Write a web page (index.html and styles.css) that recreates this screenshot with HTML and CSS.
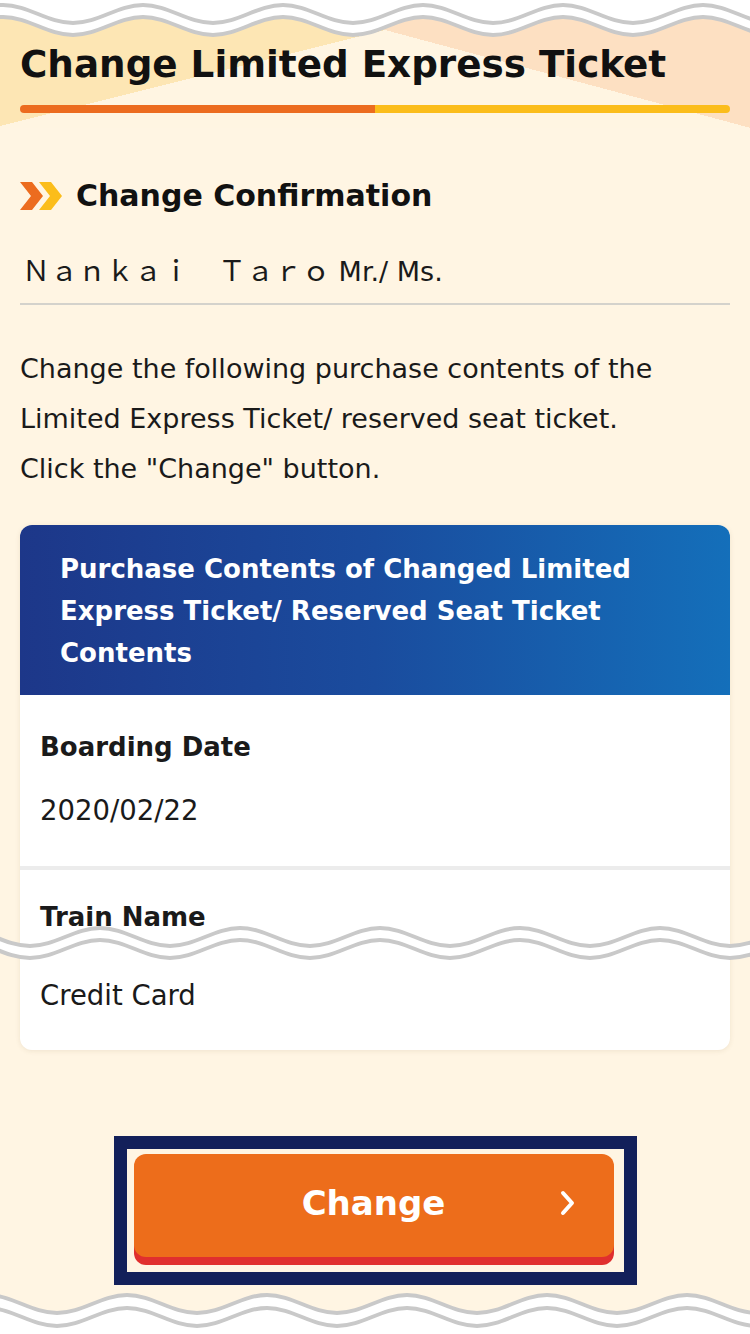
FILE: index.html
```html
<!DOCTYPE html>
<html lang="en">
<head>
<meta charset="utf-8">
<title>Change Limited Express Ticket</title>
<link rel="stylesheet" href="styles.css">
</head>
<body>
<div class="page">
  <header class="page-head">
    <h1 class="page-title">Change Limited Express Ticket</h1>
    <div class="progress"><span class="progress-done"></span><span class="progress-rest"></span></div>
  </header>

  <main class="content">
    <h2 class="section-title">
      <svg class="chevrons" width="44" height="28" viewBox="0 0 44 28" aria-hidden="true">
        <polygon points="0,0 12,0 23,14 12,28 0,28 11,14" fill="#ec6c1f"/>
        <polygon points="19,0 31,0 42,14 31,28 19,28 30,14" fill="#fbbd1b"/>
      </svg>
      <span>Change Confirmation</span>
    </h2>

    <p class="customer"><span class="customer-name">Ｎａｎｋａｉ　Ｔａｒｏ</span> Mr./ Ms.</p>

    <p class="lead">Change the following purchase contents of the Limited Express Ticket/ reserved seat ticket.<br>Click the "Change" button.</p>

    <section class="card">
      <h3 class="card-head">Purchase Contents of Changed Limited Express Ticket/ Reserved Seat Ticket Contents</h3>
      <div class="card-row row-date">
        <div class="row-label">Boarding Date</div>
        <div class="row-value">2020/02/22</div>
      </div>
      <div class="card-row row-train">
        <div class="row-label">Train Name</div>
        <div class="row-value">Credit Card</div>
      </div>
    </section>

    <div class="action">
      <div class="focus-frame">
        <button class="btn-change" type="button">
          <span class="btn-spacer"></span>
          <span class="btn-label">Change</span>
          <svg class="btn-arrow" width="16" height="26" viewBox="0 0 16 26" aria-hidden="true">
            <polyline points="3,3 12,13 3,23" fill="none" stroke="#fff" stroke-width="4" stroke-linecap="round" stroke-linejoin="round"/>
          </svg>
        </button>
      </div>
    </div>
  </main>

  <svg class="wave wave-top" width="750" height="40" viewBox="0 0 750 40" aria-hidden="true">
    <defs>
      <path id="wv" d="M-140 0 C-114.5 0 -95.5 18 -70 18 C-44.5 18 -25.5 0 0 0 C25.5 0 44.5 18 70 18 C95.5 18 114.5 0 140 0 C165.5 0 184.5 18 210 18 C235.5 18 254.5 0 280 0 C305.5 0 324.5 18 350 18 C375.5 18 394.5 0 420 0 C445.5 0 464.5 18 490 18 C515.5 18 534.5 0 560 0 C585.5 0 604.5 18 630 18 C655.5 18 674.5 0 700 0 C725.5 0 744.5 18 770 18 C795.5 18 814.5 0 840 0 C865.5 0 884.5 18 910 18"/>
    </defs>
    <path transform="translate(3,17)" fill="#fff" d="M-140 0 C-114.5 0 -95.5 18 -70 18 C-44.5 18 -25.5 0 0 0 C25.5 0 44.5 18 70 18 C95.5 18 114.5 0 140 0 C165.5 0 184.5 18 210 18 C235.5 18 254.5 0 280 0 C305.5 0 324.5 18 350 18 C375.5 18 394.5 0 420 0 C445.5 0 464.5 18 490 18 C515.5 18 534.5 0 560 0 C585.5 0 604.5 18 630 18 C655.5 18 674.5 0 700 0 C725.5 0 744.5 18 770 18 C795.5 18 814.5 0 840 0 C865.5 0 884.5 18 910 18 L910 -60 L-140 -60 Z"/>
    <use href="#wv" transform="translate(3,5)" class="wave-line"/>
    <use href="#wv" transform="translate(3,17)" class="wave-line"/>
  </svg>

  <svg class="wave wave-mid" width="750" height="50" viewBox="0 0 750 50" aria-hidden="true">
    <use href="#wv" transform="translate(-40,14)" class="wave-band"/>
    <use href="#wv" transform="translate(-40,8)" class="wave-line"/>
    <use href="#wv" transform="translate(-40,20)" class="wave-line"/>
  </svg>

  <svg class="wave wave-bottom" width="750" height="46" viewBox="0 0 750 46" aria-hidden="true">
    <path transform="translate(-13,7)" fill="#fff" d="M-140 0 C-114.5 0 -95.5 18 -70 18 C-44.5 18 -25.5 0 0 0 C25.5 0 44.5 18 70 18 C95.5 18 114.5 0 140 0 C165.5 0 184.5 18 210 18 C235.5 18 254.5 0 280 0 C305.5 0 324.5 18 350 18 C375.5 18 394.5 0 420 0 C445.5 0 464.5 18 490 18 C515.5 18 534.5 0 560 0 C585.5 0 604.5 18 630 18 C655.5 18 674.5 0 700 0 C725.5 0 744.5 18 770 18 C795.5 18 814.5 0 840 0 C865.5 0 884.5 18 910 18 L910 80 L-140 80 Z"/>
    <use href="#wv" transform="translate(-13,7)" class="wave-line"/>
    <use href="#wv" transform="translate(-13,20)" class="wave-line"/>
  </svg>
</div>
</body>
</html>
```

FILE: styles.css
```css
* { box-sizing: border-box; }

html, body {
  margin: 0;
  padding: 0;
  background: #fff5e3;
}

body {
  font-family: "DejaVu Sans", "Noto Sans CJK JP", sans-serif;
  color: #1a1a1a;
}

.page {
  position: relative;
  width: 750px;
  min-height: 1334px;
  overflow: hidden;
  background: #fff5e3;
}

/* header */
.page-head {
  padding: 36px 20px 15px;
  background: conic-gradient(at 385px 30px, #fde0c2 0deg 105deg, #fff5e2 105deg 256deg, #fde6b4 256deg 360deg);
}

.page-title {
  margin: 0;
  font-size: 37.3px;
  line-height: 56px;
  font-weight: 700;
  color: #111;
}

.progress {
  display: flex;
  height: 8px;
  margin-top: 13px;
  border-radius: 4px;
  overflow: hidden;
}

.progress-done { flex: 1; background: #ec6c1f; }
.progress-rest { flex: 1; background: #fbbd1b; }

/* content */
.content {
  padding: 0 20px 48px;
}

.section-title {
  display: flex;
  align-items: center;
  gap: 12px;
  margin: 46px 0 0;
  font-size: 30px;
  line-height: 44px;
  font-weight: 700;
  color: #111;
}

.chevrons { flex: none; }

.customer {
  margin: 31px 0 0;
  padding: 0 0 11px 2px;
  border-bottom: 2px solid #d4d2cc;
  font-size: 27px;
  line-height: 40px;
  color: #1a1a1a;
}

.customer-name {
  font-family: "Noto Sans CJK JP", sans-serif;
  font-size: 28px;
}

.lead {
  margin: 39px 0 0;
  font-size: 27px;
  line-height: 50px;
  color: #1a1a1a;
}

/* card */
.card {
  margin-top: 31px;
  background: #fff;
  border-radius: 12px;
  overflow: hidden;
  box-shadow: 0 1px 5px rgba(120, 100, 60, 0.12);
}

.card-head {
  margin: 0;
  padding: 23px 40px 21px;
  background: linear-gradient(90deg, #1d3789 0%, #1a4c9e 50%, #146fba 100%);
  color: #fff;
  font-size: 26px;
  line-height: 42px;
  font-weight: 700;
}

.card-row {
  padding: 0 20px;
}

.row-date {
  padding-top: 34px;
  padding-bottom: 36px;
  border-bottom: 4px solid #ececec;
}

.row-train {
  padding-top: 29px;
  padding-bottom: 35px;
}

.row-label {
  font-size: 26px;
  line-height: 36px;
  font-weight: 700;
  color: #1a1a1a;
}

.row-value {
  font-size: 27.5px;
  line-height: 40px;
  color: #1a1a1a;
}

.row-date .row-value { margin-top: 25px; }
.row-train .row-value { margin-top: 40px; }

/* button */
.action {
  display: flex;
  justify-content: center;
  margin-top: 86px;
}

.focus-frame {
  width: 523px;
  padding: 5px 10px 7px 7px;
  border: 13px solid #13205a;
}

.btn-change {
  display: grid;
  grid-template-columns: 1fr auto 1fr;
  align-items: center;
  width: 100%;
  height: 103px;
  margin: 0 0 8px;
  padding: 0 0 6px;
  border: 0;
  border-radius: 12px;
  background: #ed6d1b;
  box-shadow: 0 8px 0 #e02f2e;
  color: #fff;
  font-family: "DejaVu Sans", sans-serif;
  font-size: 34px;
  font-weight: 700;
  cursor: pointer;
}

.btn-label { line-height: 48px; }

.btn-arrow {
  justify-self: end;
  margin-right: 38px;
}

/* cut marks */
.wave {
  position: absolute;
  left: 0;
  display: block;
}

.wave-top { top: 0; }
.wave-mid { top: 920px; }
.wave-bottom { top: 1288px; }

.wave-line {
  fill: none;
  stroke: #c9c9c9;
  stroke-width: 4;
}

.wave-band {
  fill: none;
  stroke: #fff;
  stroke-width: 14;
}
```
